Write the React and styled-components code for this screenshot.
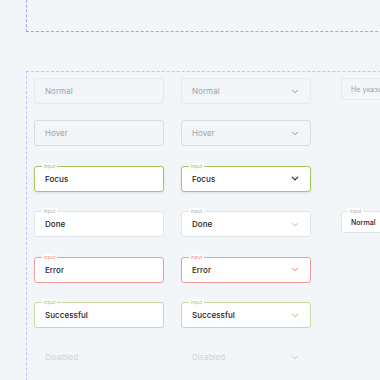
import React from 'react'
import styled, { createGlobalStyle } from 'styled-components'

const Global = createGlobalStyle`
  html, body {
    margin: 0;
    background: #f3f6f9;
    overflow: hidden;
  }
  body {
    font-family: Inter, "Noto Sans", sans-serif;
    width: 380px;
    height: 380px;
  }
`

const Page = styled.div`
  padding-left: 26px;
  height: 380px;
  overflow: hidden;
`

const TopSet = styled.div`
  margin-top: -10px;
  height: 41px;
  width: 420px;
  border: 1px dashed #ac9cfc;
  border-top: none;
`

const Set = styled.div`
  margin-top: 39px;
  width: 420px;
  height: 400px;
  border: 1px dashed #cbc0fc;
  padding: 6px 0 0 7px;
  box-sizing: border-box;
`

const Grid = styled.div`
  display: grid;
  grid-template-columns: 130px 130px 60px;
  grid-auto-rows: auto;
  column-gap: 17px;
  row-gap: 16px;
`

const Cell = styled.div`
  padding-top: ${p => (p.labeled ? '3.5px' : '0')};
  ${p => p.third && 'margin-left: 13px;'}
`

const palette = {
  normal: { border: '#e5e8ed', bg: 'transparent', text: '#9aa1ab', chev: '#8f96a0', weight: 400 },
  hover: { border: '#d9dde3', bg: 'transparent', text: '#9aa1ab', chev: '#8f96a0', weight: 400 },
  focus: { border: '#a6c864', bg: '#fff', text: '#1d2127', chev: '#1d2127', label: '#9cc45c', weight: 500, shadow: true },
  done: { border: '#e1e5ea', bg: '#fff', text: '#1d2127', chev: '#b5bbc4', label: '#aeb4bd', weight: 500 },
  error: { border: '#f39b9b', bg: '#fff', text: '#1d2127', chev: '#ef7373', label: '#f28b8b', weight: 500 },
  success: { border: '#c6daa2', bg: '#fff', text: '#1d2127', chev: '#9cc45c', label: '#a7cb6a', weight: 500 },
  disabled: { border: 'transparent', bg: 'transparent', text: '#cdd2d9', chev: '#c3c8cf', weight: 400 },
}

const Field = styled.div`
  position: relative;
  height: ${p => (p.small ? '22px' : '26px')};
  box-sizing: border-box;
  border: 1px solid ${p => palette[p.state].border};
  border-radius: 3px;
  background: ${p => palette[p.state].bg};
  box-shadow: ${p => (palette[p.state].shadow ? '0 1px 3px rgba(120, 150, 70, 0.18)' : 'none')};
  display: flex;
  align-items: center;
  justify-content: space-between;
  padding: 0 ${p => (p.small ? '9px' : '10px')};
`

const Value = styled.span`
  font-size: ${p => (p.small ? '7px' : '8px')};
  color: ${p => palette[p.state].text};
  font-weight: ${p => palette[p.state].weight};
  white-space: nowrap;
  letter-spacing: 0.05px;
`

const Label = styled.span`
  position: absolute;
  top: -4px;
  left: ${p => (p.small ? '6px' : '7px')};
  padding: 0 1.5px;
  background: #fff;
  font-size: 5px;
  line-height: 6px;
  color: ${p => palette[p.state].label};
`

const Chevron = ({ color, bold }) => (
  <svg width="8" height="5" viewBox="0 0 8 5" style={{ marginRight: 1 }}>
    <path d="M1.2 1.2 L4 3.8 L6.8 1.2" fill="none" stroke={color} strokeWidth={bold ? 1.1 : 0.9} strokeLinecap="round" strokeLinejoin="round" />
  </svg>
)

const Input = ({ state, text, select, label, small }) => (
  <Field state={state} small={small}>
    {label && <Label state={state} small={small}>Input</Label>}
    <Value state={state} small={small}>{text}</Value>
    {select && <Chevron color={palette[state].chev} bold={state === 'focus'} />}
  </Field>
)

const rows = [
  { state: 'normal', text: 'Normal' },
  { state: 'hover', text: 'Hover' },
  { state: 'focus', text: 'Focus', label: true },
  { state: 'done', text: 'Done', label: true },
  { state: 'error', text: 'Error', label: true },
  { state: 'success', text: 'Successful', label: true },
  { state: 'disabled', text: 'Disabled' },
]

const extra = {
  normal: <Input state="normal" text="Не указано" small />,
  done: <Input state="done" text="Normal" small label />,
}

export default function App() {
  return (
    <>
      <Global />
      <Page>
        <TopSet />
        <Set>
          <Grid>
            {rows.map(r => (
              <React.Fragment key={r.state}>
                <Cell labeled={r.label}>
                  <Input state={r.state} text={r.text} label={r.label} />
                </Cell>
                <Cell labeled={r.label}>
                  <Input state={r.state} text={r.text} label={r.label} select />
                </Cell>
                <Cell labeled={r.label} third>
                  {extra[r.state]}
                </Cell>
              </React.Fragment>
            ))}
          </Grid>
        </Set>
      </Page>
    </>
  )
}
